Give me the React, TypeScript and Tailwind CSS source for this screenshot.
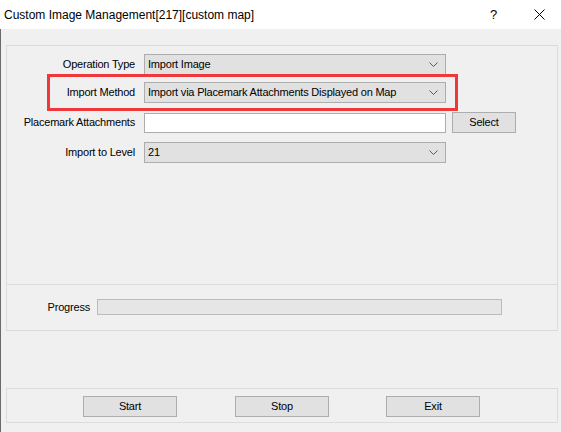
import React from "react";

const uiFont = { fontFamily: '"Liberation Sans", Arial, sans-serif' };

function Chevron() {
  return (
    <svg width="9" height="5" viewBox="0 0 9 5" className="shrink-0">
      <path d="M0.5 0.5 L4.5 4.5 L8.5 0.5" fill="none" stroke="#5a5a5a" strokeWidth="1" />
    </svg>
  );
}

function Combo({ value }: { value: string }) {
  return (
    <div className="w-[302px] h-[21px] border border-[#adadad] bg-[#e1e1e1] flex items-center pl-[3px] pr-[7px] text-[11px] tracking-[-0.2px] text-black">
      <span className="flex-1 whitespace-nowrap">{value}</span>
      <Chevron />
    </div>
  );
}

function Label({ text }: { text: string }) {
  return (
    <div className="w-[128px] mr-[9px] text-right text-[11px] tracking-[-0.2px] text-black whitespace-nowrap">{text}</div>
  );
}

function Button({ text, w }: { text: string; w: string }) {
  return (
    <div className={`${w} h-[21px] border border-[#adadad] bg-[#e1e1e1] flex items-center justify-center text-[11px] tracking-[-0.2px] text-black`}>
      {text}
    </div>
  );
}

export default function App() {
  return (
    <div className="w-[561px] h-[432px] bg-[#f0f0f0] flex flex-col overflow-hidden" style={uiFont}>
      {/* title bar */}
      <div className="h-[29px] bg-white flex items-center shrink-0">
        <span className="pl-[4px] text-[12px] text-black whitespace-nowrap flex-1">
          Custom Image Management[217][custom map]
        </span>
        <span className="text-[13px] text-black w-[10px] mr-[34px]">?</span>
        <svg width="11" height="11" viewBox="0 0 11 11" className="mr-[16px]">
          <path d="M0.5 0.5 L10.5 10.5 M10.5 0.5 L0.5 10.5" stroke="#000" strokeWidth="1" />
        </svg>
      </div>

      {/* dialog body */}
      <div className="flex-1 border-l border-[#6a6a6a] pl-[5px] pr-[3px] pt-[16px] flex flex-col">
        {/* parameters group */}
        <div className="relative h-[240px] border border-[#dcdcdc] pt-[8px] flex flex-col">
          <div className="flex items-center h-[21px]">
            <Label text="Operation Type" />
            <Combo value="Import Image" />
          </div>
          <div className="flex items-center h-[21px] mt-[7px]">
            <Label text="Import Method" />
            <Combo value="Import via Placemark Attachments Displayed on Map" />
          </div>
          <div className="flex items-center h-[21px] mt-[9px]">
            <Label text="Placemark Attachments" />
            <div className="w-[302px] h-[20px] mt-[1px] border border-[#adadad] bg-white" />
            <div className="ml-[6px]">
              <Button text="Select" w="w-[64px]" />
            </div>
          </div>
          <div className="flex items-center h-[21px] mt-[9px]">
            <Label text="Import to Level" />
            <Combo value="21" />
          </div>

          {/* highlight around the import method row */}
          <div className="absolute left-[40px] top-[28px] w-[411px] h-[37px] border-[3px] border-[#f0383b]" />
        </div>

        {/* progress group */}
        <div className="h-[46px] border border-t-0 border-[#dcdcdc] flex items-center pb-[1px]">
          <div className="w-[83px] text-right text-[11px] tracking-[-0.2px] text-black">Progress</div>
          <div className="ml-[7px] w-[405px] h-[16px] border border-[#bcbcbc] bg-[#e6e6e6]" />
        </div>

        {/* action buttons */}
        <div className="mt-[57px] h-[35px] border border-[#dcdcdc] flex items-start pt-[7px] pl-[76px]">
          <Button text="Start" w="w-[94px]" />
          <div className="ml-[58px]">
            <Button text="Stop" w="w-[94px]" />
          </div>
          <div className="ml-[57px]">
            <Button text="Exit" w="w-[94px]" />
          </div>
        </div>
      </div>
    </div>
  );
}
